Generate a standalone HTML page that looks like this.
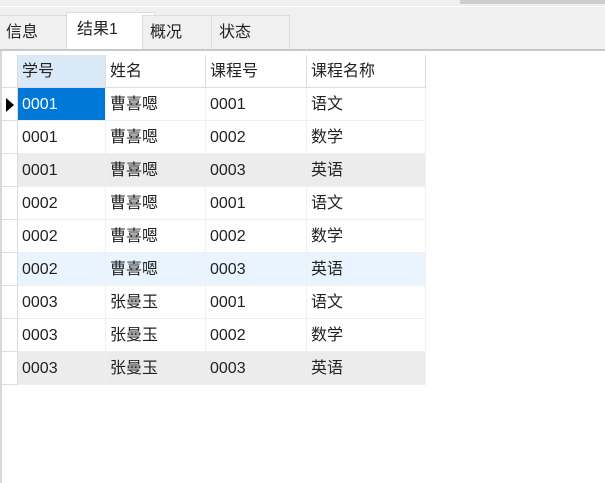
<!DOCTYPE html><html><head><meta charset="utf-8"><style>
body{margin:0;width:605px;height:483px;background:#fff;position:relative;overflow:hidden;font-family:"Liberation Sans","Microsoft YaHei","Noto Sans CJK SC",sans-serif;font-size:16px;color:#222}
.a{position:absolute;box-sizing:border-box}
.tab{position:absolute;top:15px;height:34px;background:#f0f0f0;border:1px solid #dcdcdc;border-bottom:none;line-height:34px;padding-left:7px}
.c{position:absolute;height:33px;line-height:34px;padding-left:4px;box-sizing:border-box;border-right:1px solid #f0f0f0;border-bottom:1px solid #f0f0f0}
</style></head><body>
<div class="a" style="left:0;top:0;width:605px;height:6px;background:#f0f0f0"></div>
<div class="a" style="left:460px;top:0;width:145px;height:4px;background:#cdcdcd"></div>
<div class="a" style="left:0;top:7px;width:605px;height:42px;background:#f0f0f0"></div>
<div class="tab" style="left:-2px;width:68px">信息</div>
<div class="tab" style="left:66px;top:12px;height:38px;width:77px;background:#fff;line-height:34px;padding-left:10px">结果1</div>
<div class="tab" style="left:142px;width:70px">概况</div>
<div class="tab" style="left:211px;width:70px">状态</div>
<div class="a" style="left:0;top:49px;width:605px;height:2px;background:#c8c8c8"></div>
<div class="a" style="left:0;top:51px;width:2px;height:432px;background:#d8d8d8"></div>
<div id="g"></div>
<script>
var cols=[[2,16],[18,88],[106,100],[206,101],[307,119]];
var rows=[["学号","姓名","课程号","课程名称"],["0001","曹喜嗯","0001","语文"],["0001","曹喜嗯","0002","数学"],["0001","曹喜嗯","0003","英语"],["0002","曹喜嗯","0001","语文"],["0002","曹喜嗯","0002","数学"],["0002","曹喜嗯","0003","英语"],["0003","张曼玉","0001","语文"],["0003","张曼玉","0002","数学"],["0003","张曼玉","0003","英语"]];
var bg={3:"#ececec",6:"#eaf4fe",9:"#ececec"};var h="";
rows.forEach(function(r,i){var y=55+i*33;
h+='<div class="c" style="left:2px;top:'+y+'px;width:16px;background:#fff;border-right:1px solid #ddd;border-bottom:1px solid #ddd">'+(i==1?'<span style="position:absolute;left:4px;top:10px;border-left:8px solid #000;border-top:7px solid transparent;border-bottom:7px solid transparent"></span>':'')+'</div>';
for(var j=0;j<4;j++){var c=cols[j+1],b=bg[i]||"#fff",col="#222";
if(i==0){b=j==0?"#d9e9f8":"#fff";}
if(i==1&&j==0){b="#0078d7";col="#fff";}
h+='<div class="c" style="left:'+c[0]+'px;top:'+y+'px;width:'+c[1]+'px;background:'+b+';color:'+col+(i==0?';border-color:#ddd':'')+'">'+r[j]+'</div>';}});
document.getElementById("g").innerHTML=h;
</script>
</body></html>
